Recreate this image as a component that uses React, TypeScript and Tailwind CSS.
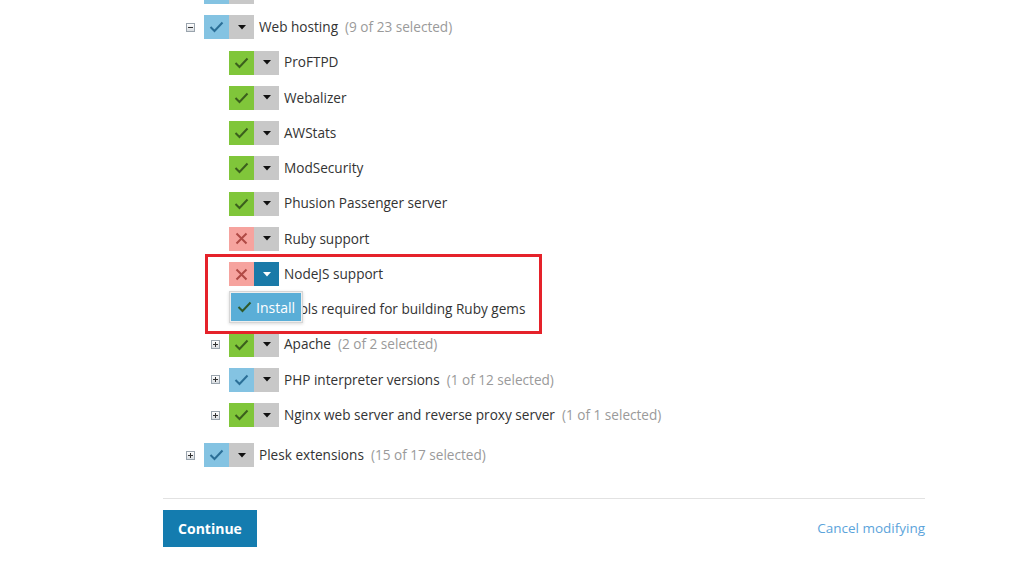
import React from "react";

type Kind = "blue" | "green" | "red";

const Check = ({ color }: { color: string }) => (
  <svg width="15" height="12" viewBox="0 0 15 12" fill="none">
    <polyline points="1.5,6 5.5,10 13.5,1.5" stroke={color} strokeWidth="2" strokeLinecap="butt" strokeLinejoin="miter" />
  </svg>
);

const Cross = () => (
  <svg width="13" height="13" viewBox="0 0 13 13" fill="none">
    <path d="M1.5 1.5 L11.5 11.5 M11.5 1.5 L1.5 11.5" stroke="#b04a45" strokeWidth="2" />
  </svg>
);

const Caret = ({ color }: { color: string }) => (
  <svg width="8" height="5" viewBox="0 0 8 5">
    <polygon points="0,0 8,0 4,4.5" fill={color} />
  </svg>
);

const Expander = ({ type }: { type: "plus" | "minus" | null }) => {
  if (!type) return <div className="w-[9px] h-[9px]" />;
  return (
    <div className="w-[9px] h-[9px] border border-[#9aa4ad] bg-gradient-to-b from-white to-[#d9dde1] flex items-center justify-center relative">
      <div className="w-[5px] h-[1px] bg-[#333]" />
      {type === "plus" && <div className="absolute w-[1px] h-[5px] bg-[#333]" />}
    </div>
  );
};

const Toggle = ({ kind, active }: { kind: Kind; active?: boolean }) => {
  const bg = kind === "blue" ? "bg-[#84c3e2]" : kind === "green" ? "bg-[#80c63a]" : "bg-[#f6a39e]";
  return (
    <div className="flex h-[24px]">
      <div className={`w-[25px] h-full flex items-center justify-center ${bg}`}>
        {kind === "blue" && <Check color="#2b6f97" />}
        {kind === "green" && <Check color="#3b5f1d" />}
        {kind === "red" && <Cross />}
      </div>
      <div className={`w-[25px] h-full flex items-center justify-center ${active ? "bg-[#1a7aa8]" : "bg-[#c8c8c8]"}`}>
        <Caret color={active ? "#ffffff" : "#111111"} />
      </div>
    </div>
  );
};

type RowProps = {
  level: 1 | 2;
  exp?: "plus" | "minus" | null;
  kind: Kind;
  active?: boolean;
  label: string;
  count?: string;
  className?: string;
  children?: React.ReactNode;
};

const Row = ({ level, exp = null, kind, active, label, count, className = "", children }: RowProps) => (
  <div className={`flex items-center h-[24px] relative ${level === 1 ? "pl-[23px]" : "pl-[48px]"} ${className}`}>
    <Expander type={exp} />
    <div className="ml-[9px]">
      <Toggle kind={kind} active={active} />
    </div>
    <span className="ml-[5px] text-[13.6px] text-[#333] whitespace-nowrap">{label}</span>
    {count && <span className="ml-[7px] text-[13.6px] text-[#9a9a9a] whitespace-nowrap">{count}</span>}
    {children}
  </div>
);

export default function App() {
  return (
    <div className="w-[1024px] h-[562px] overflow-hidden bg-white relative font-['Open_Sans',sans-serif]">
      <div className="ml-[163px] w-[762px]">
        <div className="flex flex-col gap-[11.25px] -mt-[20px]">
          <Row level={1} kind="blue" label="Mail hosting" className="[&>span]:translate-y-[-3px]" />
          <Row level={1} exp="minus" kind="blue" label="Web hosting" count="(9 of 23 selected)" />
          <Row level={2} kind="green" label="ProFTPD" />
          <Row level={2} kind="green" label="Webalizer" />
          <Row level={2} kind="green" label="AWStats" />
          <Row level={2} kind="green" label="ModSecurity" />
          <Row level={2} kind="green" label="Phusion Passenger server" />
          <Row level={2} kind="red" label="Ruby support" />
          <Row level={2} kind="red" active label="NodeJS support">
            <div className="absolute left-[66px] top-[29px] w-[74px] h-[32px] border border-[#d6d6d6] bg-[#eeeeee] p-[1px] shadow-[0_1px_3px_rgba(0,0,0,0.15)] z-10">
              <div className="w-full h-full bg-[#5aaed7] flex items-center pl-[6px]">
                <Check color="#2f5a2a" />
                <span className="ml-[4px] text-[14px] text-white">Install</span>
              </div>
            </div>
          </Row>
          <Row level={2} kind="green" label="Tools required for building Ruby gems" />
          <Row level={2} exp="plus" kind="green" label="Apache" count="(2 of 2 selected)" />
          <Row level={2} exp="plus" kind="blue" label="PHP interpreter versions" count="(1 of 12 selected)" />
          <Row level={2} exp="plus" kind="green" label="Nginx web server and reverse proxy server" count="(1 of 1 selected)" />
          <Row level={1} exp="plus" kind="blue" label="Plesk extensions" count="(15 of 17 selected)" className="mt-[5px]" />
        </div>
        <div className="mt-[31px] h-[1px] bg-[#e2e2e2]" />
        <div className="mt-[11px] flex items-center justify-between">
          <button className="w-[94px] h-[37px] bg-[#147caf] text-white text-[14px] font-bold">Continue</button>
          <a className="text-[13.5px] text-[#5ba4db] mt-[-1px]">Cancel modifying</a>
        </div>
      </div>
      <div className="absolute left-[205px] top-[254px] w-[337px] h-[80px] border-[3px] border-[#e5222a] pointer-events-none" />
    </div>
  );
}
